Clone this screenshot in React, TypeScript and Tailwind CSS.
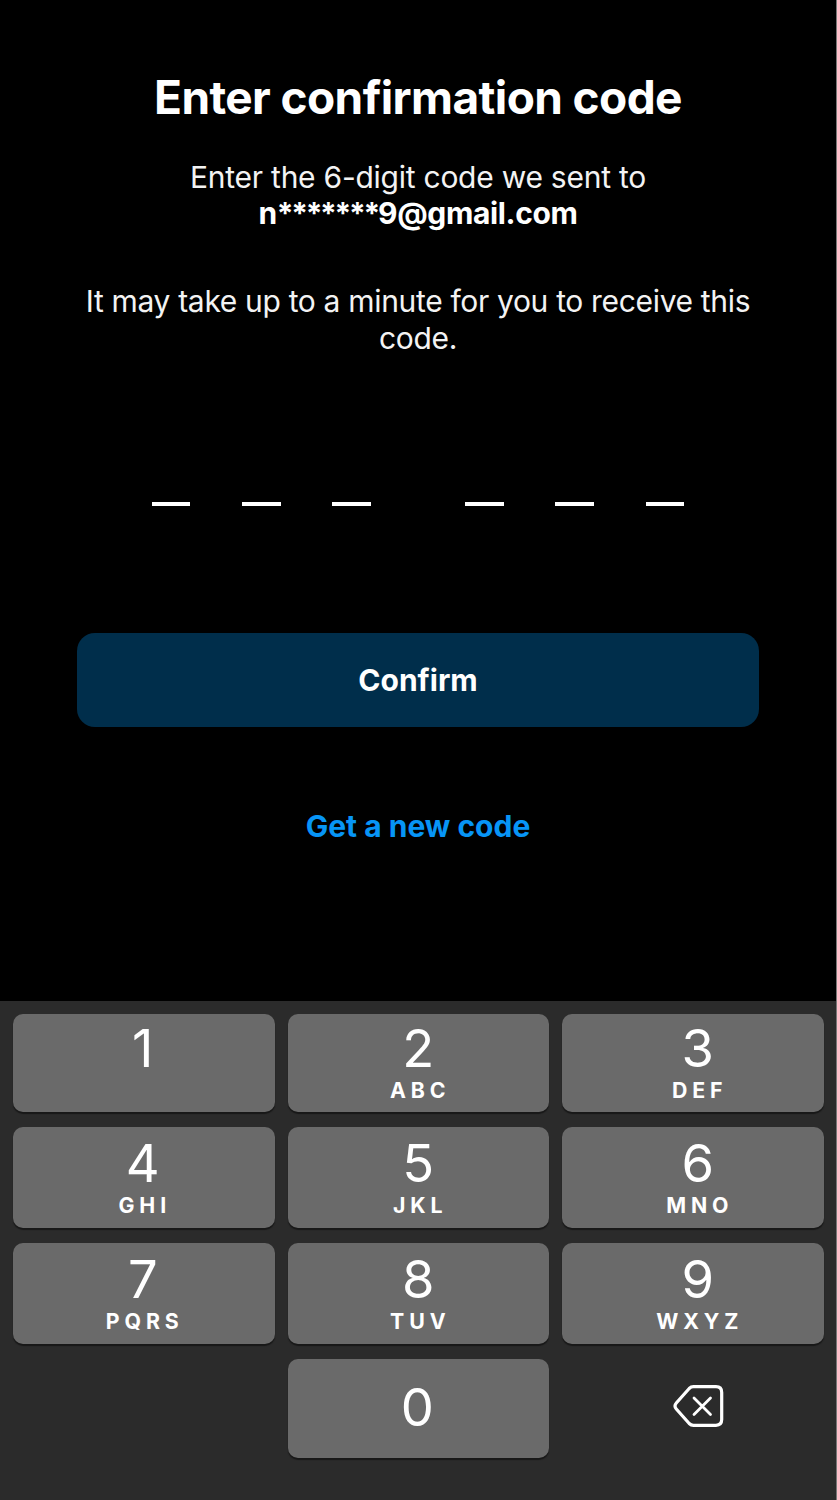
const keys = [
  ["1", ""], ["2", "ABC"], ["3", "DEF"],
  ["4", "GHI"], ["5", "JKL"], ["6", "MNO"],
  ["7", "PQRS"], ["8", "TUV"], ["9", "WXYZ"],
];

const columnPadding = ["pr-[2px]", "pr-0", "pl-[10px]"];

function Key({ digit, letters, padding }: { digit: string; letters: string; padding: string }) {
  return (
    <button className={`flex w-full flex-col items-center rounded-[10px] bg-[#6a6a6a] shadow-[0_2px_1px_#181818] ${padding}`}>
      <span className="text-[52.5px] leading-[56px]">{digit}</span>
      {letters && <span className="mt-px pl-[4px] text-[21.3px] leading-[26px] font-[650] tracking-[4.9px]">{letters}</span>}
    </button>
  );
}

function keyPadding(index: number) {
  return `${index < 3 ? "pt-[6px]" : "pt-[8px]"} ${columnPadding[index % 3]}`;
}

export default function App() {
  return (
    <main className="flex h-[1500px] w-[837px] flex-col overflow-hidden border-r border-[#777] bg-black font-['Inter',sans-serif] text-white">
      <section className="flex h-[1001px] flex-col items-center">
        <h1 className="mt-[67px] text-[46px] leading-[60px] font-bold tracking-[-0.6px] whitespace-nowrap">Enter confirmation code</h1>
        <p className="mt-[32px] text-center text-[30px] leading-[36px] tracking-[-0.25px] whitespace-nowrap text-[#f3f3f3]">
          Enter the 6-digit code we sent to<br />
          <span className="font-[650] tracking-[-0.35px] text-white">n<span className="tracking-[-2.3px]">*******</span>9@gmail.com</span>
        </p>
        <p className="mt-[52px] text-center text-[30px] leading-[37px] tracking-[-0.33px] whitespace-nowrap text-[#f3f3f3]">
          It may take up to a minute for you to receive this<br />code.
        </p>
        <div className="mt-[145px] flex gap-[94.3px]">
          {[0, 1].map((g) => (
            <div key={g} className="flex gap-[51.6px]">
              {[0, 1, 2].map((i) => <span key={i} className="h-[4px] w-[38.6px] bg-white" />)}
            </div>
          ))}
        </div>
        <button className="mt-[127px] h-[94px] w-[682px] rounded-[18px] bg-[#002e4b] pt-px text-[30px] font-[650]">Confirm</button>
        <button className="mt-[79px] text-[30px] leading-[40px] font-[650] text-[#0795f6]">Get a new code</button>
      </section>
      <section className="grid h-[499px] grid-cols-[261.5px_261.5px_261.5px] grid-rows-[98.3px_100.6px_100.6px_98.6px] gap-x-[13px] gap-y-[15.2px] bg-[#2b2b2b] pt-[13px] pl-[13px]">
        {keys.map(([d, l], i) => <Key key={d} digit={d} letters={l} padding={keyPadding(i)} />)}
        <span />
        <Key digit="0" letters="" padding="pt-[20px] pr-[2px]" />
        <button className="flex items-start justify-center pt-[25px] pl-[12px]">
          <svg width="52" height="44" viewBox="0 0 52 44" fill="none" stroke="white" strokeWidth="3.2" strokeLinecap="round" strokeLinejoin="round">
            <path d="M20.5 2.7H43Q48.7 2.7 48.7 8.4V35.6Q48.7 41.3 43 41.3H20.5Q18 41.3 16.2 39.5L3.3 25Q.7 22 3.3 19L16.2 4.5Q18 2.7 20.5 2.7Z" />
            <path d="M21 14L37.5 30.5M37.5 14L21 30.5" strokeWidth="2.8" />
          </svg>
        </button>
      </section>
    </main>
  );
}
